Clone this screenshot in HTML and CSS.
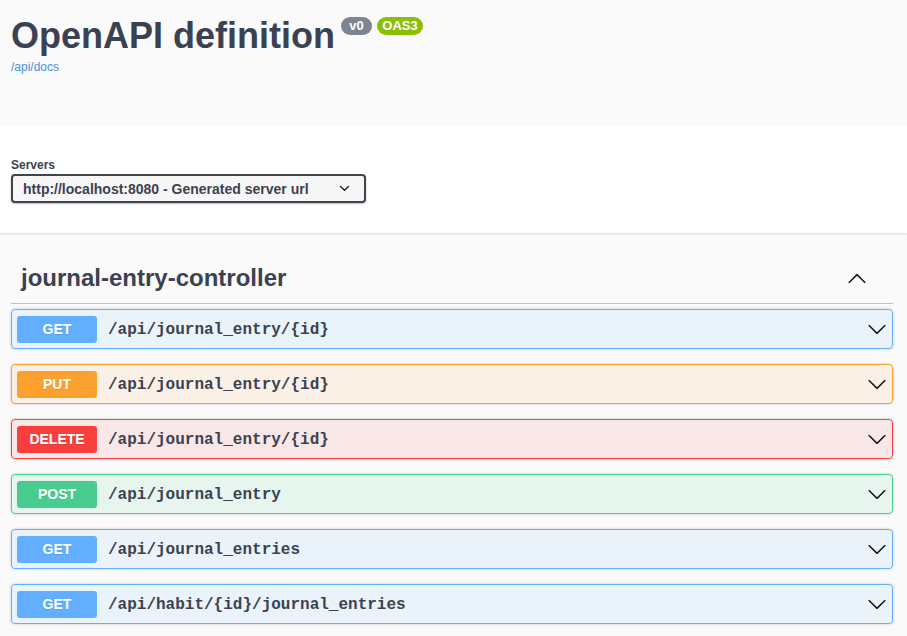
FILE: index.html
```html
<!DOCTYPE html>
<html lang="en">
<head>
<meta charset="utf-8">
<title>Swagger UI</title>
<link rel="stylesheet" href="styles.css">
</head>
<body>
<div class="info">
  <div class="title-row">
    <h2 class="title">OpenAPI definition</h2>
    <span class="badge version">v0</span>
    <span class="badge stamp">OAS3</span>
  </div>
  <a class="link" href="#">/api/docs</a>
</div>

<div class="scheme">
  <div class="servers-label">Servers</div>
  <div class="select">
    <span>http://localhost:8080 - Generated server url</span>
    <svg class="select-arrow" width="12" height="8" viewBox="0 0 12 8"><polyline points="1.5,1.8 6,6 10.5,1.8" fill="none" stroke="#222" stroke-width="1.7" stroke-linecap="round" stroke-linejoin="round"/></svg>
  </div>
</div>

<div class="section">
  <div class="tag">
    <h3 class="tag-name">journal-entry-controller</h3>
    <svg class="arrow" width="20" height="20" viewBox="0 0 20 20"><path d="M17.418 14.908c.272.268.709.268.979 0s.271-.701 0-.969l-7.908-7.83c-.27-.268-.707-.268-.979 0l-7.908 7.83c-.27.268-.27.701 0 .969.271.268.709.268.979 0L10 7.767l7.418 7.141z"/></svg>
  </div>

  <div class="opblock get">
    <span class="method">GET</span>
    <span class="path">/api/journal_entry/{id}</span>
    <svg class="arrow" width="20" height="20" viewBox="0 0 20 20"><path d="M17.418 6.109c.272-.268.709-.268.979 0s.271.701 0 .969l-7.908 7.83c-.27.268-.707.268-.979 0l-7.908-7.83c-.27-.268-.27-.701 0-.969.271-.268.709-.268.979 0L10 13.25l7.418-7.141z"/></svg>
  </div>
  <div class="opblock put">
    <span class="method">PUT</span>
    <span class="path">/api/journal_entry/{id}</span>
    <svg class="arrow" width="20" height="20" viewBox="0 0 20 20"><path d="M17.418 6.109c.272-.268.709-.268.979 0s.271.701 0 .969l-7.908 7.83c-.27.268-.707.268-.979 0l-7.908-7.83c-.27-.268-.27-.701 0-.969.271-.268.709-.268.979 0L10 13.25l7.418-7.141z"/></svg>
  </div>
  <div class="opblock delete">
    <span class="method">DELETE</span>
    <span class="path">/api/journal_entry/{id}</span>
    <svg class="arrow" width="20" height="20" viewBox="0 0 20 20"><path d="M17.418 6.109c.272-.268.709-.268.979 0s.271.701 0 .969l-7.908 7.83c-.27.268-.707.268-.979 0l-7.908-7.83c-.27-.268-.27-.701 0-.969.271-.268.709-.268.979 0L10 13.25l7.418-7.141z"/></svg>
  </div>
  <div class="opblock post">
    <span class="method">POST</span>
    <span class="path">/api/journal_entry</span>
    <svg class="arrow" width="20" height="20" viewBox="0 0 20 20"><path d="M17.418 6.109c.272-.268.709-.268.979 0s.271.701 0 .969l-7.908 7.83c-.27.268-.707.268-.979 0l-7.908-7.83c-.27-.268-.27-.701 0-.969.271-.268.709-.268.979 0L10 13.25l7.418-7.141z"/></svg>
  </div>
  <div class="opblock get">
    <span class="method">GET</span>
    <span class="path">/api/journal_entries</span>
    <svg class="arrow" width="20" height="20" viewBox="0 0 20 20"><path d="M17.418 6.109c.272-.268.709-.268.979 0s.271.701 0 .969l-7.908 7.83c-.27.268-.707.268-.979 0l-7.908-7.83c-.27-.268-.27-.701 0-.969.271-.268.709-.268.979 0L10 13.25l7.418-7.141z"/></svg>
  </div>
  <div class="opblock get">
    <span class="method">GET</span>
    <span class="path">/api/habit/{id}/journal_entries</span>
    <svg class="arrow" width="20" height="20" viewBox="0 0 20 20"><path d="M17.418 6.109c.272-.268.709-.268.979 0s.271.701 0 .969l-7.908 7.83c-.27.268-.707.268-.979 0l-7.908-7.83c-.27-.268-.27-.701 0-.969.271-.268.709-.268.979 0L10 13.25l7.418-7.141z"/></svg>
  </div>
</div>
</body>
</html>
```

FILE: styles.css
```css
html, body {
  margin: 0;
  padding: 0;
}
body {
  background: #fafafa;
  font-family: "Liberation Sans", Arial, sans-serif;
  color: #3b4151;
}

.info {
  height: 125px;
  padding: 0 11px;
  box-sizing: border-box;
}
.title-row {
  display: flex;
  align-items: flex-start;
  padding-top: 16px;
}
.title {
  margin: 0;
  font-size: 36px;
  line-height: 40px;
  font-weight: 700;
  color: #3b4151;
}
.badge {
  display: inline-block;
  margin-top: 1px;
  height: 18px;
  line-height: 18px;
  border-radius: 57px;
  color: #fff;
  font-size: 13px;
  font-weight: 700;
  text-align: center;
}
.version {
  margin-left: 6px;
  width: 31px;
  background: #7d8492;
}
.stamp {
  margin-left: 5px;
  width: 46px;
  background: #89bf04;
}
.link {
  display: block;
  margin-top: 4px;
  font-size: 12px;
  line-height: 14px;
  color: #4990e2;
  text-decoration: none;
}

.scheme {
  background: #fff;
  height: 108px;
  box-sizing: border-box;
  padding: 33px 11px 0;
  box-shadow: 0 1px 2px 0 rgba(0, 0, 0, 0.15);
}
.servers-label {
  font-size: 12px;
  line-height: 14px;
  font-weight: 700;
  margin-bottom: 2px;
}
.select {
  width: 355px;
  height: 29px;
  box-sizing: border-box;
  display: flex;
  align-items: center;
  justify-content: space-between;
  padding: 0 14px 0 10px;
  border: 2px solid #41444e;
  border-radius: 4px;
  background: #f7f7f7;
  box-shadow: 0 1px 2px 0 rgba(0, 0, 0, 0.25);
  font-size: 14px;
  font-weight: 700;
  color: #3b4151;
}
.select-arrow {
  display: block;
  width: 11px;
  height: 7px;
}

.section {
  padding: 30px 14px 0 11px;
}
.tag {
  display: flex;
  align-items: center;
  justify-content: space-between;
  padding: 0 26px 10px 10px;
  border-bottom: 1px solid rgba(59, 65, 81, 0.3);
  margin-bottom: 5px;
}
.tag-name {
  margin: 0;
  font-size: 24px;
  line-height: 30px;
  font-weight: 700;
  color: #3b4151;
}
.arrow {
  display: block;
  fill: #111;
}

.opblock {
  display: flex;
  align-items: center;
  height: 40px;
  box-sizing: border-box;
  padding: 5px;
  margin-bottom: 15px;
  border: 1px solid;
  border-radius: 4px;
  box-shadow: 0 0 3px rgba(0, 0, 0, 0.19);
}
.method {
  width: 80px;
  height: 27px;
  line-height: 27px;
  border-radius: 3px;
  text-align: center;
  color: #fff;
  font-size: 14px;
  font-weight: 700;
  text-shadow: 0 1px 0 rgba(0, 0, 0, 0.1);
  flex: none;
}
.path {
  flex: 1;
  padding: 1px 10px 0 11px;
  font-family: "Liberation Mono", "Courier New", monospace;
  font-size: 16px;
  font-weight: 700;
  color: #3b4151;
}

.get { background: rgba(97, 175, 254, 0.1); border-color: #61affe; }
.get .method { background: #61affe; }
.put { background: rgba(252, 161, 48, 0.1); border-color: #fca130; }
.put .method { background: #fca130; }
.delete { background: rgba(249, 62, 62, 0.1); border-color: #f93e3e; }
.delete .method { background: #f93e3e; }
.post { background: rgba(73, 204, 144, 0.1); border-color: #49cc90; }
.post .method { background: #49cc90; }
```
